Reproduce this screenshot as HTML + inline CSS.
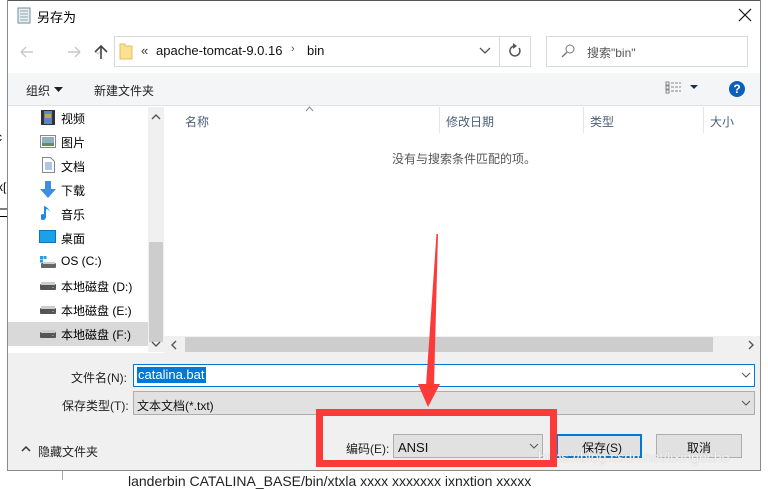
<!DOCTYPE html>
<html><head><meta charset="utf-8"><style>
*{margin:0;padding:0;box-sizing:border-box}
body{width:768px;height:480px;overflow:hidden;background:#fff;font-family:"Liberation Sans","Noto Sans CJK SC",sans-serif;font-size:12px;color:#000;position:relative}
.a{position:absolute}
.t{white-space:nowrap}
</style></head><body>
<div class="a t" style="left:-4px;top:130px;font-size:12px">c</div>
<div class="a t" style="left:-3px;top:180px;font-size:12px">x[</div>
<div class="a t" style="left:-3px;top:204px;font-size:12px">二</div>
<div class="a" style="left:62px;top:470px;width:1px;height:10px;background:#aaa"></div>
<div class="a t" style="left:128px;top:474px;font-size:14px;color:#222;line-height:14px">landerbin CATALINA_BASE/bin/xtxla xxxx xxxxxxx ixnxtion xxxxx</div>
<div class="a" style="left:7px;top:0;width:754px;height:471px;background:#fff;border:1px solid #888;border-top:none"></div>
<div class="a" style="left:8px;top:0;width:752px;height:1px;background:#555"></div>
<svg class="a" style="left:16px;top:7px" width="16" height="17"><rect x="2" y="1" width="12" height="15" fill="#e8eef4" stroke="#6f8ba5"/><line x1="4" y1="4" x2="12" y2="4" stroke="#8aa"/><line x1="4" y1="7" x2="12" y2="7" stroke="#8aa"/><line x1="4" y1="10" x2="12" y2="10" stroke="#8aa"/><line x1="4" y1="13" x2="12" y2="13" stroke="#8aa"/></svg>
<div class="a t" style="left:37px;top:7px;font-size:13px">另存为</div>
<svg class="a" style="left:738px;top:8px" width="14" height="14"><path d="M1 1L13 13M13 1L1 13" stroke="#111" stroke-width="1.2"/></svg>
<svg class="a" style="left:18px;top:44px" width="90" height="16"><path d="M3 8H15M3 8L8 3M3 8L8 13" stroke="#c8c8c8" stroke-width="1.4" fill="none"/><path d="M50 8H62M62 8L57 3M62 8L57 13" stroke="#c8c8c8" stroke-width="1.4" fill="none"/><path d="M77 7L80 10L83 7" stroke="#c8c8c8" fill="none"/></svg>
<svg class="a" style="left:93px;top:43px" width="16" height="18"><path d="M8 16V3M2 9L8 3L14 9" stroke="#444" stroke-width="1.6" fill="none"/></svg>
<div class="a" style="left:114px;top:36px;width:386px;height:31px;border:1px solid #d9d9d9"></div>
<div class="a" style="left:499px;top:36px;width:32px;height:31px;border:1px solid #d9d9d9"></div>
<svg class="a" style="left:119px;top:43px" width="14" height="17"><path d="M1 1h5v2h7v13H1z" fill="#fbe190" stroke="#e0c062"/></svg>
<div class="a t" style="left:141px;top:43px;font-size:13px;color:#333">«</div>
<div class="a t" style="left:156px;top:43px;font-size:13px;color:#111">apache-tomcat-9.0.16</div>
<div class="a t" style="left:291px;top:43px;font-size:11px;color:#555">›</div>
<div class="a t" style="left:307px;top:43px;font-size:13px;color:#111">bin</div>
<svg class="a" style="left:479px;top:47px" width="12" height="8"><path d="M1 1L6 6L11 1" stroke="#555" stroke-width="1.3" fill="none"/></svg>
<svg class="a" style="left:508px;top:43px" width="14" height="16"><path d="M11 5A5 5 0 1 1 6 3" stroke="#555" stroke-width="1.5" fill="none"/><path d="M5 0L9 3L5 6" fill="#555"/></svg>
<div class="a" style="left:546px;top:36px;width:202px;height:31px;border:1px solid #d9d9d9"></div>
<svg class="a" style="left:561px;top:44px" width="14" height="14"><circle cx="9" cy="5" r="4" stroke="#777" fill="none"/><path d="M6 8L1 13" stroke="#777" stroke-width="1.3"/></svg>
<div class="a t" style="left:587px;top:44px;font-size:12px;color:#555">搜索"bin"</div>
<div class="a" style="left:8px;top:73px;width:752px;height:33px;background:#f4f5f7;border-bottom:1px solid #e3e3e3"></div>
<div class="a t" style="left:26px;top:82px;font-size:12px;color:#222">组织</div>
<svg class="a" style="left:54px;top:87px" width="9" height="5"><path d="M0 0H9L4.5 5z" fill="#222"/></svg>
<div class="a t" style="left:94px;top:82px;font-size:12px;color:#222">新建文件夹</div>
<svg class="a" style="left:665px;top:81px" width="36" height="14"><rect x="1" y="1" width="3" height="3" fill="none" stroke="#888"/><rect x="1" y="5" width="3" height="3" fill="none" stroke="#888"/><rect x="1" y="9" width="3" height="3" fill="none" stroke="#888"/><path d="M6 2h10M6 6h10M6 10h10" stroke="#888" stroke-dasharray="3 1"/><path d="M25 4H33L29 8z" fill="#1a3050"/></svg>
<div class="a" style="left:729px;top:81px;width:16px;height:16px;border-radius:50%;background:#0c5fbd;color:#fff;font-weight:bold;font-size:12px;text-align:center;line-height:16px">?</div>
<div class="a" style="left:148px;top:107px;width:16px;height:245px;background:#f0f0f0"></div>
<div class="a" style="left:149px;top:242px;width:14px;height:100px;background:#cdcdcd"></div>
<svg class="a" style="left:150px;top:113px" width="12" height="8"><path d="M2 6L6 2L10 6" stroke="#555" stroke-width="1.4" fill="none"/></svg>
<svg class="a" style="left:150px;top:340px" width="12" height="8"><path d="M2 2L6 6L10 2" stroke="#555" stroke-width="1.4" fill="none"/></svg>
<div class="a" style="left:8px;top:322px;width:140px;height:24px;background:#d9d9d9"></div>
<svg class="a" style="left:40px;top:109px" width="16" height="17"><rect x="1" y="1" width="14" height="15" fill="#333"/><rect x="4" y="2" width="8" height="13" fill="#5d84c4"/><rect x="5" y="5" width="6" height="4" fill="#c7a44a"/></svg>
<svg class="a" style="left:40px;top:135px" width="16" height="13"><rect x="0.5" y="0.5" width="15" height="12" fill="#fff" stroke="#888"/><rect x="2" y="2" width="12" height="9" fill="#8fb0c0"/><rect x="2" y="8" width="12" height="3" fill="#6b8a5a"/></svg>
<svg class="a" style="left:42px;top:157px" width="13" height="16"><path d="M0.5 0.5h8l4 4v11h-12z" fill="#fff" stroke="#888"/><path d="M3 6h7M3 8h7M3 10h7M3 12h7" stroke="#5b8fd0"/></svg>
<svg class="a" style="left:40px;top:181px" width="16" height="18"><path d="M5 0h6v8h5l-8 9-8-9h5z" fill="#3b8ee0"/></svg>
<svg class="a" style="left:41px;top:205px" width="12" height="17"><path d="M5 1v11a3 3 0 1 1-2-2.8V1c3 1 5 3 6 6-1-2-2.5-3-4-3" fill="#1e88e5"/></svg>
<svg class="a" style="left:39px;top:230px" width="17" height="14"><rect x="0.5" y="0.5" width="16" height="12" fill="#1aa1e8" stroke="#0a74c0"/></svg>
<svg class="a" style="left:39px;top:255px" width="18" height="14"><rect x="1" y="1" width="3" height="3" fill="#1aa1e8"/><rect x="4.5" y="1" width="3" height="3" fill="#1aa1e8"/><rect x="1" y="4.5" width="3" height="3" fill="#1aa1e8"/><rect x="2" y="8" width="15" height="5" rx="1" fill="#666"/><rect x="4" y="7" width="12" height="2" fill="#ccc"/></svg>
<svg class="a" style="left:39px;top:281px" width="18" height="10"><rect x="1" y="3" width="16" height="6" rx="1" fill="#555"/><rect x="2" y="1" width="14" height="3" fill="#ccc"/><rect x="13" y="6" width="2" height="1" fill="#3c3"/></svg>
<svg class="a" style="left:39px;top:305px" width="18" height="10"><rect x="1" y="3" width="16" height="6" rx="1" fill="#555"/><rect x="2" y="1" width="14" height="3" fill="#ccc"/><rect x="13" y="6" width="2" height="1" fill="#3c3"/></svg>
<svg class="a" style="left:39px;top:329px" width="18" height="10"><rect x="1" y="3" width="16" height="6" rx="1" fill="#555"/><rect x="2" y="1" width="14" height="3" fill="#ccc"/><rect x="13" y="6" width="2" height="1" fill="#3c3"/></svg>
<div class="a t" style="left:61px;top:110px;font-size:12px">视频</div>
<div class="a t" style="left:61px;top:134px;font-size:12px">图片</div>
<div class="a t" style="left:61px;top:158px;font-size:12px">文档</div>
<div class="a t" style="left:61px;top:182px;font-size:12px">下载</div>
<div class="a t" style="left:61px;top:206px;font-size:12px">音乐</div>
<div class="a t" style="left:61px;top:230px;font-size:12px">桌面</div>
<div class="a t" style="left:61px;top:254px;font-size:12px">OS (C:)</div>
<div class="a t" style="left:61px;top:278px;font-size:12px">本地磁盘 (D:)</div>
<div class="a t" style="left:61px;top:302px;font-size:12px">本地磁盘 (E:)</div>
<div class="a t" style="left:61px;top:326px;font-size:12px">本地磁盘 (F:)</div>
<div class="a t" style="left:185px;top:113px;font-size:12px;color:#4c607a">名称</div>
<svg class="a" style="left:305px;top:106px" width="9" height="6"><path d="M1 5L4.5 1L8 5" stroke="#888" fill="none"/></svg>
<div class="a" style="left:439px;top:107px;width:1px;height:26px;background:#e5e5e5"></div>
<div class="a t" style="left:446px;top:113px;font-size:12px;color:#4c607a">修改日期</div>
<div class="a" style="left:583px;top:107px;width:1px;height:26px;background:#e5e5e5"></div>
<div class="a t" style="left:590px;top:113px;font-size:12px;color:#4c607a">类型</div>
<div class="a" style="left:703px;top:107px;width:1px;height:26px;background:#e5e5e5"></div>
<div class="a t" style="left:710px;top:113px;font-size:12px;color:#4c607a">大小</div>
<div class="a t" style="left:392px;top:150px;font-size:12px;color:#555">没有与搜索条件匹配的项。</div>
<div class="a" style="left:164px;top:336px;width:596px;height:17px;background:#f0f0f0"></div>
<div class="a" style="left:185px;top:337px;width:528px;height:15px;background:#cdcdcd"></div>
<svg class="a" style="left:169px;top:339px" width="10" height="12"><path d="M7 2L3 6L7 10" stroke="#555" stroke-width="1.4" fill="none"/></svg>
<svg class="a" style="left:746px;top:339px" width="10" height="12"><path d="M3 2L7 6L3 10" stroke="#555" stroke-width="1.4" fill="none"/></svg>
<div class="a" style="left:8px;top:353px;width:752px;height:117px;background:#f0f0f0"></div>
<div class="a t" style="left:71px;top:369px;font-size:12px;color:#222">文件名(N):</div>
<div class="a" style="left:133px;top:364px;width:622px;height:23px;background:#fff;border:1px solid #0078d7"></div>
<div class="a t" style="left:137px;top:367px;font-size:13px;color:#fff;background:#0078d7;padding:0 1px;line-height:16px">catalina.bat</div>
<svg class="a" style="left:741px;top:372px" width="10" height="7"><path d="M1 1L5 5L9 1" stroke="#555" fill="none"/></svg>
<div class="a t" style="left:62px;top:397px;font-size:12px;color:#222">保存类型(T):</div>
<div class="a" style="left:133px;top:391px;width:622px;height:24px;background:#e1e1e1;border:1px solid #adadad"></div>
<div class="a t" style="left:137px;top:397px;font-size:12px;color:#111">文本文档(*.txt)</div>
<svg class="a" style="left:741px;top:400px" width="10" height="7"><path d="M1 1L5 5L9 1" stroke="#555" fill="none"/></svg>
<svg class="a" style="left:21px;top:445px" width="10" height="7"><path d="M1 6L5 2L9 6" stroke="#333" stroke-width="1.5" fill="none"/></svg>
<div class="a t" style="left:38px;top:443px;font-size:12px;color:#222">隐藏文件夹</div>
<div class="a t" style="left:346px;top:440px;font-size:12px;color:#222">编码(E):</div>
<div class="a" style="left:393px;top:434px;width:150px;height:24px;background:#e1e1e1;border:1px solid #adadad"></div>
<div class="a t" style="left:398px;top:440px;font-size:13px;color:#111">ANSI</div>
<svg class="a" style="left:529px;top:443px" width="10" height="7"><path d="M1 1L5 5L9 1" stroke="#555" fill="none"/></svg>
<div class="a" style="left:556px;top:434px;width:86px;height:24px;background:#e1e1e1;border:2px solid #0078d7"></div>
<div class="a t" style="left:582px;top:439px;font-size:12px;color:#111">保存(S)</div>
<div class="a" style="left:656px;top:434px;width:86px;height:24px;background:#e1e1e1;border:1px solid #adadad"></div>
<div class="a t" style="left:687px;top:439px;font-size:12px;color:#111">取消</div>
<div class="a t" style="left:538px;top:449px;font-size:14px;color:rgba(255,255,255,0.85);text-shadow:0 0 1px #aaa">https://blog.csdn.net/lixingecho</div>
<svg class="a" style="left:0;top:0" width="768" height="480"><path d="M436.5 234L438 234L434 386L426 386z" fill="#fd3a3a"/><path d="M418 384L440 384L428 407z" fill="#fd3a3a"/><rect x="319.5" y="412.5" width="234" height="51" fill="none" stroke="#fd3a3a" stroke-width="7"/></svg>
</body></html>
